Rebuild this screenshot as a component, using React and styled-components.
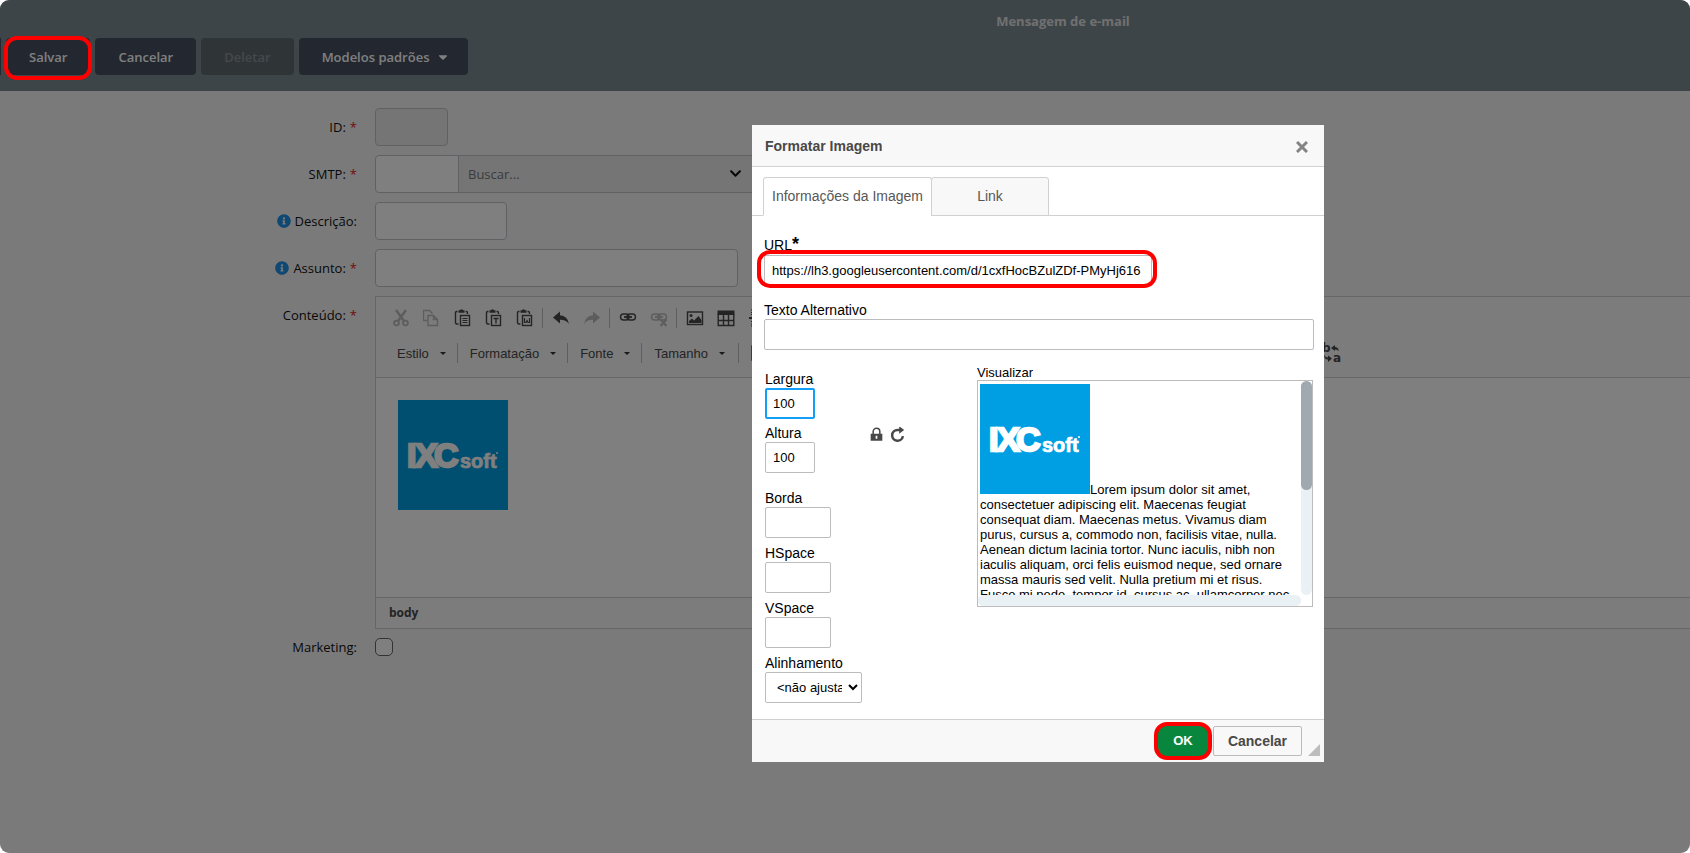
import React from 'react';
import styled, { createGlobalStyle } from "styled-components";
import { FaCaretDown, FaChevronDown, FaInfoCircle } from "react-icons/fa";


const GlobalStyle = createGlobalStyle`
* { box-sizing: border-box; }
body { margin: 0; background: #fff; }
button, input, select { font: inherit; margin: 0; }
`;

const Page = styled.div`
    position: relative;
    min-height: 100vh;
    overflow: hidden;
    border-radius: 9px;
    background: #f5f5f5;
    font-family: "Open Sans", "Noto Sans", sans-serif;
    font-size: 13px;
    color: #111;
`;

/* top bar */

const TopBar = styled.header`
    background: #7b8a90;
    padding-bottom: 16px;
`;

const PageTitle = styled.h1`
    margin: 0;
    padding: 12px 0 7px 436px;
    text-align: center;
    font-size: 13px;
    line-height: 19px;
    font-weight: 700;
    color: #e0e0e0;
`;

const Actions = styled.div`
    display: flex;
    gap: 5px;
`;

const ActionEdge = styled.span`
    width: 1px;
    background: #465060;
`;

const ActionButton = styled.button`
    display: flex;
    align-items: center;
    gap: 7px;
    height: 37px;
    padding: 0 ${(props) => (props.$menu ? "18px" : "23px")} 0 23px;
    border: 0;
    border-radius: 4px;
    background: ${(props) => (props.disabled ? "#5e6a6e" : "#465060")};
    color: ${(props) => (props.disabled ? "#8a9296" : "#fff")};
    font-weight: 600;
`;

const Highlighted = styled.div`
    position: relative;
    width: ${(props) => props.$width || "auto"};
`;

const Ring = styled.span`
    position: absolute;
    z-index: 3;
    inset: ${(props) => props.$inset};
    border: 4px solid #f00;
    border-radius: 13px;
    pointer-events: none;
`;

/* form */

const Form = styled.form`
    display: flex;
    flex-direction: column;
    gap: 9px;
    padding-top: 17px;
`;

const Row = styled.div`
    display: flex;
    align-items: flex-start;
    gap: 18px;
`;

const Label = styled.label`
    display: flex;
    flex: 0 0 357px;
    align-items: center;
    justify-content: flex-end;
    gap: 4px;
    height: ${(props) => props.$height || "38px"};
`;

const Star = styled.span`
    color: #e02020;
`;

const InfoIcon = styled(FaInfoCircle)`
    color: #2090e8;
`;

const Field = styled.input`
    width: ${(props) => props.$width};
    height: 38px;
    padding: 0 9px;
    border: 1px solid #bfc3c8;
    border-radius: ${(props) => (props.$joined ? "4px 0 0 4px" : "4px")};
    background: ${(props) => (props.disabled ? "#ebebeb" : "#fff")};
`;

const Group = styled.div`
    display: flex;
`;

const SearchBox = styled.div`
    position: relative;
    width: 320px;
    margin-left: -1px;

    svg {
        position: absolute;
        top: 12px;
        right: 36px;
        pointer-events: none;
    }
`;

const SearchSelect = styled.select`
    appearance: none;
    width: 100%;
    height: 38px;
    padding: 0 9px;
    border: 1px solid #bfc3c8;
    background: #ebebeb;
    color: #777;
`;

const Check = styled.input`
    appearance: none;
    width: 18px;
    height: 18px;
    border: 1px solid #666;
    border-radius: 5px;
    background: #fff;
`;

/* rich text editor */

const Editor = styled.div`
    flex: 1;
    border: 1px solid #ccc;
    border-right: 0;
    font-family: "Liberation Sans", sans-serif;
    font-size: 13px;
    color: #484848;
`;

const Toolbar = styled.div`
    display: flex;
    flex-direction: column;
    gap: 9px;
    padding: 8px 9px 11px;
    background: #f8f8f8;
    border-bottom: 1px solid #ccc;
`;

const ToolRow = styled.div`
    display: flex;
    align-items: center;
    height: 26px;
`;

const Tool = styled.button`
    display: flex;
    flex: none;
    justify-content: center;
    width: 31px;
    padding: 0;
    border: 0;
    background: none;
    color: #484848;
    opacity: ${(props) => (props.disabled ? 0.35 : 1)};
    margin-left: ${(props) => props.$indent || "0"};
`;

const Divider = styled.span`
    flex: none;
    width: 1px;
    height: 20px;
    margin: 0 ${(props) => (props.$tight ? "0" : "2px")};
    background: #bcbcbc;
`;

const Combo = styled.button`
    display: flex;
    flex: none;
    align-items: center;
    gap: 11px;
    padding: 0 11px 0 12px;
    border: 0;
    background: none;
    color: #484848;

    &::after {
        content: "";
        border: 3px solid transparent;
        border-top-color: #333;
        border-bottom: 0;
    }
`;

const Canvas = styled.div`
    height: 219px;
    padding: 22px;
    background: #fff;
`;

const PathBar = styled.div`
    padding: 0 13px;
    border-top: 1px solid #ccc;
    background: #f8f8f8;
    font-family: "Open Sans", "Noto Sans", sans-serif;
    font-size: 12px;
    line-height: 30px;
    font-weight: 700;
`;

/* dialog */

const Overlay = styled.div`
    position: absolute;
    z-index: 2;
    inset: 0;
    display: flex;
    align-items: flex-start;
    justify-content: center;
    padding: 125px 0 0 386px;
    background: rgba(0, 0, 0, 0.5);
`;

const Dialog = styled.section`
    width: 572px;
    background: #fff;
    font-family: "Liberation Sans", sans-serif;
    font-size: 13px;
    line-height: 16px;
    color: #000;
`;

const DialogHead = styled.div`
    display: flex;
    align-items: center;
    justify-content: space-between;
    height: 42px;
    padding: 0 16px 0 13px;
    border-bottom: 1px solid #d1d1d1;
    background: #f8f8f8;
`;

const DialogTitle = styled.h2`
    margin: 0;
    font-size: 14px;
    color: #484848;
`;

const CloseButton = styled.button`
    display: flex;
    padding: 2px 0 0;
    border: 0;
    background: none;
    color: #848484;
`;

const Tabs = styled.div`
    display: flex;
    padding: 10px 11px 0;
    border-bottom: 1px solid #d1d1d1;
`;

const Tab = styled.button`
    height: 39px;
    width: ${(props) => props.$width};
    margin: 0 -1px -1px 0;
    padding: 0 0 2px;
    border: 1px solid #d1d1d1;
    border-bottom-color: ${(props) => (props.$active ? "#fff" : "#d1d1d1")};
    border-radius: 3px 3px 0 0;
    background: ${(props) => (props.$active ? "#fff" : "#f8f8f8")};
    color: #575757;
    font-size: 14px;
`;

const DialogBody = styled.div`
    padding: 18px 10px 16px 12px;
`;

const DialogLabel = styled.label`
    display: block;
    padding-bottom: 1px;
    font-size: 14px;
`;

const Required = styled.b`
    font-size: 18px;
    line-height: 20px;
`;

const Input = styled.input`
    display: block;
    width: ${(props) => props.$width || "100%"};
    height: 31px;
    padding: 0 ${(props) => (props.$focused ? "6px" : "7px")};
    border: ${(props) => (props.$focused ? "2px solid #139ff7" : "1px solid #bcbcbc")};
    border-radius: 2px;
    background: #fff;
    outline: 0;
`;

const Select = styled.select`
    display: block;
    width: 97px;
    height: 31px;
    padding: 0 3px 0 7px;
    border: 1px solid #bcbcbc;
    border-radius: 2px;
    background: #fff;
    color: #000;
`;

const AltText = styled.div`
    margin: 16px 0 15px;
`;

const Columns = styled.div`
    display: flex;
    justify-content: space-between;
`;

const Measures = styled.div`
    display: flex;
    flex-direction: column;
    gap: 7px;
    padding: 6px 0 0 1px;
`;

const SizeRow = styled.div`
    display: flex;
    align-items: flex-end;
    gap: 54px;
    margin-bottom: 10px;
`;

const SizeFields = styled.div`
    display: flex;
    flex-direction: column;
    gap: 6px;
`;

const RatioButtons = styled.div`
    display: flex;
    gap: 6px;
    padding-bottom: 31px;

    button {
        display: flex;
        padding: 0;
        border: 0;
        background: none;
        color: #484848;
    }
`;

const Preview = styled.div`
    width: 337px;
    padding-right: 1px;
`;

const PreviewTitle = styled.div`
    line-height: 15px;
`;

const PreviewBox = styled.div`
    display: grid;
    grid-template: 214px 11px / 1fr 11px;
    border: 1px solid #bcbcbc;
`;

const PreviewText = styled.div`
    overflow: hidden;
    padding: 3px 2px 0;
    line-height: 15px;
`;

const Track = styled.div`
    border-radius: 6px;
    background: #e9f1f5;
`;

const Thumb = styled.div`
    height: 109px;
    border-radius: 6px;
    background: #a0a9b0;
`;

const DialogFoot = styled.div`
    display: flex;
    justify-content: flex-end;
    gap: 4px;
    padding: 6px 4px;
    border-top: 1px solid #d1d1d1;
    background: #f8f8f8;
`;

const FootButton = styled.button`
    height: 30px;
    width: ${(props) => (props.$primary ? "52px" : "89px")};
    padding: 0;
    border: 1px solid ${(props) => (props.$primary ? "#09863e" : "#bcbcbc")};
    border-radius: 2px;
    background: ${(props) => (props.$primary ? "#09863e" : "#f8f8f8")};
    color: ${(props) => (props.$primary ? "#fff" : "#484848")};
    font-size: ${(props) => (props.$primary ? "13px" : "14px")};
    font-weight: 700;
`;

const Grip = styled.span`
    align-self: flex-end;
    margin-left: 2px;
    border: 6px solid transparent;
    border-right-color: #bcbcbc;
    border-bottom-color: #bcbcbc;
`;


const Icon = ({ children, size = 18 }) => (
  <svg width={size} height={size} viewBox="0 0 18 18" fill="none" stroke="currentColor" strokeWidth="1.4" aria-hidden="true">
    {children}
  </svg>
)

const Clipboard = ({ children }) => (
  <Icon>
    <path d="M3.5 2.5H2.6Q1.5 2.5 1.5 4v9.5Q1.5 15 3 15h1.5M11.5 2.5h.8q1.2 0 1.2 1.5v1" />
    <path d="M4.5 1.2h1.6a1.5 1.5 0 0 1 2.8 0h1.6v2.6h-6z" fill="currentColor" stroke="none" />
    <rect x="6.5" y="6.5" width="9" height="10" />
    {children}
  </Icon>
)

const LinkShape = () => (
  <>
    <rect x="1.5" y="5" width="8.5" height="6" rx="3" />
    <rect x="8" y="5" width="8.5" height="6" rx="3" />
    <path d="M5 8h8" strokeWidth="1.8" />
  </>
)

const Logo = () => (
  <svg width="110" height="110" viewBox="0 0 110 110" role="img" aria-label="IXCsoft">
    <rect width="110" height="110" fill="#009fe3" />
    <g fill="#fff" stroke="#fff" fontFamily="Liberation Sans, sans-serif" fontWeight="700">
      <text y="67" fontSize="34" strokeWidth="2.4">
        <tspan x="9">I</tspan><tspan x="17">X</tspan><tspan x="36">C</tspan>
      </text>
      <text x="62" y="68" fontSize="20" strokeWidth="0.7">soft</text>
    </g>
    <circle cx="99" cy="53" r="1" fill="#fff" />
  </svg>
)

const FormRow = ({ id, label, required, info, children }) => (
  <Row>
    <Label htmlFor={id}>
      {info && <InfoIcon size={14} />}
      <span>{label}</span>
      {required && <Star>*</Star>}
    </Label>
    {children}
  </Row>
)

const Measure = ({ id, label, children, ...rest }) => (
  <div>
    <DialogLabel htmlFor={id}>{label}</DialogLabel>
    {children || <Input id={id} $width="66px" {...rest} />}
  </div>
)


const App = () => {
  return (
    <Page>
      <GlobalStyle />

      <TopBar>
        <PageTitle>Mensagem de e-mail</PageTitle>
        <Actions>
          <ActionEdge />
          <Highlighted>
            <ActionButton type="button">Salvar</ActionButton>
            <Ring $inset="-2px -2px -5px" />
          </Highlighted>
          <ActionButton type="button">Cancelar</ActionButton>
          <ActionButton type="button" disabled>Deletar</ActionButton>
          <ActionButton type="button" $menu>Modelos padrões <FaCaretDown size={14} /></ActionButton>
        </Actions>
      </TopBar>

      <Form>
        <FormRow id="id" label="ID:" required>
          <Field id="id" $width="73px" disabled />
        </FormRow>

        <FormRow id="smtp" label="SMTP:" required>
          <Group>
            <Field id="smtp" $width="84px" $joined />
            <SearchBox>
              <SearchSelect aria-label="SMTP">
                <option>Buscar...</option>
              </SearchSelect>
              <FaChevronDown size={13} />
            </SearchBox>
          </Group>
        </FormRow>

        <FormRow id="descricao" label="Descrição:" info>
          <Field id="descricao" $width="132px" />
        </FormRow>

        <FormRow id="assunto" label="Assunto:" info required>
          <Field id="assunto" $width="363px" />
        </FormRow>

        <FormRow id="conteudo" label="Conteúdo:" required>
          <Editor id="conteudo">
            <Toolbar>
              <ToolRow>
                <Tool type="button" disabled aria-label="Recortar">
                  <Icon>
                    <path d="M4 1l8 11M14 1L6 12" strokeWidth="2.4" />
                    <circle cx="4.5" cy="14" r="2.4" strokeWidth="1.8" />
                    <circle cx="13.5" cy="14" r="2.4" strokeWidth="1.8" />
                  </Icon>
                </Tool>
                <Tool type="button" disabled aria-label="Copiar">
                  <Icon>
                    <path d="M4 11.5H.5v-10h6l3 3" />
                    <path d="M5 6.500h5.500l4 4v6H5zM10.500 6.500v4h4" />
                  </Icon>
                </Tool>
                <Tool type="button" aria-label="Colar">
                  <Clipboard><path d="M8.500 9.500h5M8.500 11.500h5M8.500 13.500h5" strokeWidth="1" /></Clipboard>
                </Tool>
                <Tool type="button" aria-label="Colar como texto sem formatação">
                  <Clipboard><path d="M8.500 9.500h5M11 9.500v5" /></Clipboard>
                </Tool>
                <Tool type="button" aria-label="Colar do Word">
                  <Clipboard><path d="M8.500 9v4.500h1.500l1-2 1 2h1.500V9" strokeWidth="1.200" /></Clipboard>
                </Tool>
                <Divider />
                <Tool type="button" aria-label="Desfazer">
                  <Icon><path d="M1 8.500l7-6v3.800q7.500.4 9 8.700-3.500-4.500-9-4.200v3.700z" fill="currentColor" stroke="none" /></Icon>
                </Tool>
                <Tool type="button" disabled aria-label="Refazer">
                  <Icon><path d="M17 8.500l-7-6v3.800Q2.500 6.700 1 15q3.500-4.500 9-4.200v3.700z" fill="currentColor" stroke="none" /></Icon>
                </Tool>
                <Divider />
                <Tool type="button" aria-label="Inserir link"><Icon><LinkShape /></Icon></Tool>
                <Tool type="button" disabled aria-label="Remover link">
                  <Icon><LinkShape /><path d="M10.500 10.500l6 6.500M16.500 10.500l-6 6.500" strokeWidth="2" /></Icon>
                </Tool>
                <Divider />
                <Tool type="button" aria-label="Imagem">
                  <Icon>
                    <rect x="1.5" y="3" width="15" height="12.5" />
                    <circle cx="5" cy="6.5" r="1.5" fill="currentColor" stroke="none" />
                    <path d="M3 14v-2l3-2.500 2 2L12.500 7l3 4v3z" fill="currentColor" stroke="none" />
                  </Icon>
                </Tool>
                <Tool type="button" aria-label="Tabela">
                  <Icon>
                    <path d="M.5 1.500h17v4.500H.5z" fill="currentColor" stroke="none" />
                    <path d="M1.200 5v11.500h15.600V5M1 11.500h16M6.500 6v10M11.500 6v10" />
                  </Icon>
                </Tool>
                <Tool type="button" aria-label="Inserir linha horizontal">
                  <Icon><path d="M3 1h10M3 3.500h10M3 5.500h10M3 12.500h10M3 15h10M3 17h10" strokeWidth="1" /><path d="M1 9h15" strokeWidth="2" /></Icon>
                </Tool>
              </ToolRow>
              <ToolRow>
                <Combo type="button">Estilo</Combo>
                <Divider $tight />
                <Combo type="button">Formatação</Combo>
                <Divider $tight />
                <Combo type="button">Fonte</Combo>
                <Divider $tight />
                <Combo type="button">Tamanho</Combo>
                <Divider />
                <Tool type="button" aria-label="Cor de fundo">
                  <Icon><rect x="5" y="2" width="12" height="14" /></Icon>
                </Tool>
                <Tool type="button" aria-label="Substituir" $indent="544px">
                  <svg width="20" height="20" viewBox="0 0 20 20" overflow="visible" fill="#484848" aria-hidden="true" fontFamily="DejaVu Sans" fontWeight="700" fontSize="12">
                    <text x="1" y="9">b</text>
                    <text x="12" y="19">a</text>
                    <path d="M10 5l4-3v2q3 0 4 4-2-2-4-1.500V8zM11 15.500l-4-3v2q-3 0-4-3 0 5 4 5V19z" />
                  </svg>
                </Tool>
              </ToolRow>
            </Toolbar>
            <Canvas><Logo /></Canvas>
            <PathBar>body</PathBar>
          </Editor>
        </FormRow>

        <Row>
          <Label htmlFor="marketing" $height="18px">Marketing:</Label>
          <Check id="marketing" type="checkbox" />
        </Row>
      </Form>

      <Overlay>
        <Dialog role="dialog" aria-label="Formatar Imagem">
          <DialogHead>
            <DialogTitle>Formatar Imagem</DialogTitle>
            <CloseButton type="button" aria-label="Fechar">
              <svg width="12" height="12" viewBox="0 0 12 12" stroke="currentColor" strokeWidth="3">
                <path d="M1 1l10 10M11 1L1 11" />
              </svg>
            </CloseButton>
          </DialogHead>

          <Tabs role="tablist">
            <Tab type="button" role="tab" aria-selected="true" $active $width="169px">Informações da Imagem</Tab>
            <Tab type="button" role="tab" aria-selected="false" $width="118px">Link</Tab>
          </Tabs>

          <DialogBody>
            <DialogLabel htmlFor="url">URL<Required>*</Required></DialogLabel>
            <Highlighted $width="388px">
              <Input id="url" defaultValue="https://lh3.googleusercontent.com/d/1cxfHocBZulZDf-PMyHj616" />
              <Ring $inset="-5px -5px -2px -7px" />
            </Highlighted>

            <AltText>
              <DialogLabel htmlFor="alt">Texto Alternativo</DialogLabel>
              <Input id="alt" />
            </AltText>

            <Columns>
              <Measures>
                <SizeRow>
                  <SizeFields>
                    <Measure id="largura" label="Largura" $width="50px" $focused defaultValue="100" />
                    <Measure id="altura" label="Altura" $width="50px" defaultValue="100" />
                  </SizeFields>
                  <RatioButtons>
                    <button type="button" aria-label="Bloquear proporções">
                      <Icon size={15}>
                        <path d="M5 9V5.500a4 4 0 0 1 8 0V9" strokeWidth="1.800" />
                        <path d="M2 8h14v8.500H2zM8 10.500v3.500h2v-3.500z" fill="currentColor" fillRule="evenodd" stroke="none" />
                      </Icon>
                    </button>
                    <button type="button" aria-label="Redefinir para o tamanho original">
                      <Icon size={15}>
                        <path d="M15.500 11a6.500 6.500 0 1 1-6.500-7.500h3" strokeWidth="3" />
                        <path d="M11 -1l6 4.500-6 4.500z" fill="currentColor" stroke="none" />
                      </Icon>
                    </button>
                  </RatioButtons>
                </SizeRow>
                <Measure id="borda" label="Borda" />
                <Measure id="hspace" label="HSpace" />
                <Measure id="vspace" label="VSpace" />
                <Measure id="alinhamento" label="Alinhamento">
                  <Select id="alinhamento">
                    <option>&lt;não ajustado&gt;</option>
                  </Select>
                </Measure>
              </Measures>

              <Preview>
                <PreviewTitle>Visualizar</PreviewTitle>
                <PreviewBox>
                  <PreviewText>
                    <Logo />Lorem ipsum dolor sit amet, consectetuer adipiscing elit. Maecenas feugiat
                    consequat diam. Maecenas metus. Vivamus diam purus, cursus a, commodo non, facilisis
                    vitae, nulla. Aenean dictum lacinia tortor. Nunc iaculis, nibh non iaculis aliquam, orci
                    felis euismod neque, sed ornare massa mauris sed velit. Nulla pretium mi et risus. Fusce
                    mi pede, tempor id, cursus ac, ullamcorper nec,
                  </PreviewText>
                  <Track><Thumb /></Track>
                  <Track />
                </PreviewBox>
              </Preview>
            </Columns>
          </DialogBody>

          <DialogFoot>
            <Highlighted>
              <FootButton type="button" $primary>OK</FootButton>
              <Ring $inset="-4px -3px" />
            </Highlighted>
            <FootButton type="button">Cancelar</FootButton>
            <Grip />
          </DialogFoot>
        </Dialog>
      </Overlay>
    </Page>
  )
}

export default App
